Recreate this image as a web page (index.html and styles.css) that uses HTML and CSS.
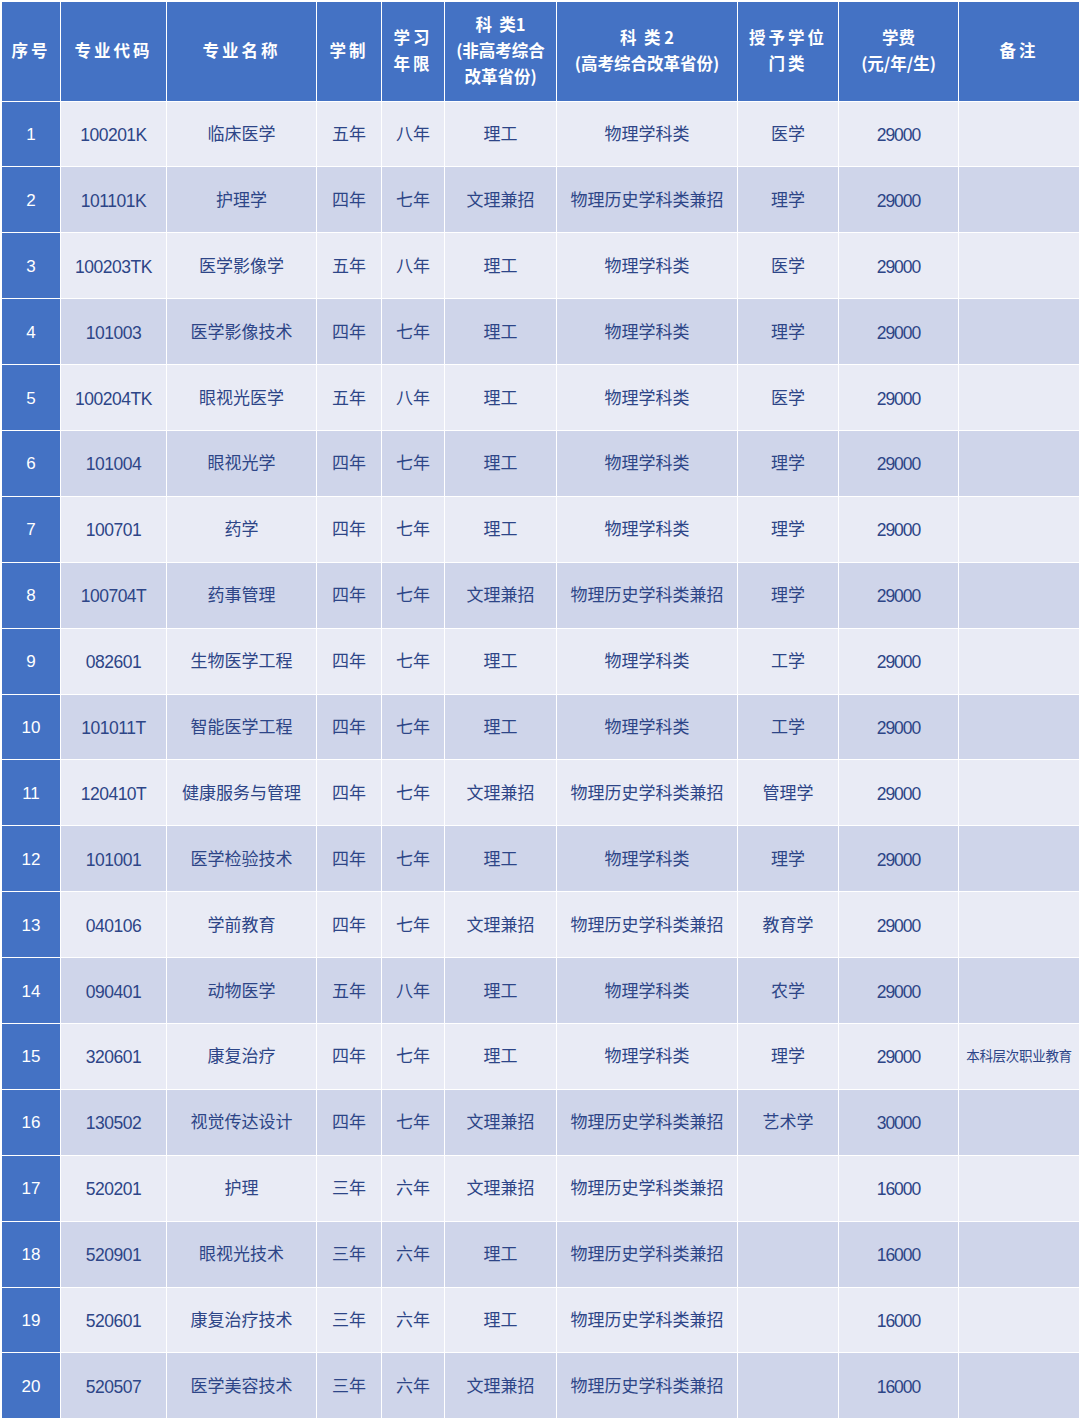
FILE: index.html
```html
<!DOCTYPE html>
<html lang="zh-CN">
<head>
<meta charset="utf-8">
<title>专业列表</title>
<link rel="stylesheet" href="styles.css">
</head>
<body>
<table class="tbl">
<colgroup>
<col class="c1"><col class="c2"><col class="c3"><col class="c4"><col class="c5"><col class="c6"><col class="c7"><col class="c8"><col class="c9"><col class="c10">
</colgroup>
<thead>
<tr>
<th class="sp">序号</th>
<th class="sp">专业代码</th>
<th class="sp">专业名称</th>
<th class="sp">学制</th>
<th class="sp">学习<br>年限</th>
<th>科&nbsp;&nbsp;类1<br>(非高考综合<br>改革省份)</th>
<th>科&nbsp;&nbsp;类&nbsp;2<br>(高考综合改革省份)</th>
<th class="sp">授予学位<br>门类</th>
<th>学费<br>(元/年/生)</th>
<th class="sp">备注</th>
</tr>
</thead>
<tbody>
<tr class="odd"><td class="idx">1</td><td class="lat">100201K</td><td>临床医学</td><td>五年</td><td>八年</td><td>理工</td><td>物理学科类</td><td>医学</td><td class="num">29000</td><td></td></tr>
<tr class="even"><td class="idx">2</td><td class="lat">101101K</td><td>护理学</td><td>四年</td><td>七年</td><td>文理兼招</td><td>物理历史学科类兼招</td><td>理学</td><td class="num">29000</td><td></td></tr>
<tr class="odd"><td class="idx">3</td><td class="lat">100203TK</td><td>医学影像学</td><td>五年</td><td>八年</td><td>理工</td><td>物理学科类</td><td>医学</td><td class="num">29000</td><td></td></tr>
<tr class="even"><td class="idx">4</td><td class="lat">101003</td><td>医学影像技术</td><td>四年</td><td>七年</td><td>理工</td><td>物理学科类</td><td>理学</td><td class="num">29000</td><td></td></tr>
<tr class="odd"><td class="idx">5</td><td class="lat">100204TK</td><td>眼视光医学</td><td>五年</td><td>八年</td><td>理工</td><td>物理学科类</td><td>医学</td><td class="num">29000</td><td></td></tr>
<tr class="even"><td class="idx">6</td><td class="lat">101004</td><td>眼视光学</td><td>四年</td><td>七年</td><td>理工</td><td>物理学科类</td><td>理学</td><td class="num">29000</td><td></td></tr>
<tr class="odd"><td class="idx">7</td><td class="lat">100701</td><td>药学</td><td>四年</td><td>七年</td><td>理工</td><td>物理学科类</td><td>理学</td><td class="num">29000</td><td></td></tr>
<tr class="even"><td class="idx">8</td><td class="lat">100704T</td><td>药事管理</td><td>四年</td><td>七年</td><td>文理兼招</td><td>物理历史学科类兼招</td><td>理学</td><td class="num">29000</td><td></td></tr>
<tr class="odd"><td class="idx">9</td><td class="lat">082601</td><td>生物医学工程</td><td>四年</td><td>七年</td><td>理工</td><td>物理学科类</td><td>工学</td><td class="num">29000</td><td></td></tr>
<tr class="even"><td class="idx">10</td><td class="lat">101011T</td><td>智能医学工程</td><td>四年</td><td>七年</td><td>理工</td><td>物理学科类</td><td>工学</td><td class="num">29000</td><td></td></tr>
<tr class="odd"><td class="idx">11</td><td class="lat">120410T</td><td>健康服务与管理</td><td>四年</td><td>七年</td><td>文理兼招</td><td>物理历史学科类兼招</td><td>管理学</td><td class="num">29000</td><td></td></tr>
<tr class="even"><td class="idx">12</td><td class="lat">101001</td><td>医学检验技术</td><td>四年</td><td>七年</td><td>理工</td><td>物理学科类</td><td>理学</td><td class="num">29000</td><td></td></tr>
<tr class="odd"><td class="idx">13</td><td class="lat">040106</td><td>学前教育</td><td>四年</td><td>七年</td><td>文理兼招</td><td>物理历史学科类兼招</td><td>教育学</td><td class="num">29000</td><td></td></tr>
<tr class="even"><td class="idx">14</td><td class="lat">090401</td><td>动物医学</td><td>五年</td><td>八年</td><td>理工</td><td>物理学科类</td><td>农学</td><td class="num">29000</td><td></td></tr>
<tr class="odd"><td class="idx">15</td><td class="lat">320601</td><td>康复治疗</td><td>四年</td><td>七年</td><td>理工</td><td>物理学科类</td><td>理学</td><td class="num">29000</td><td class="note">本科层次职业教育</td></tr>
<tr class="even"><td class="idx">16</td><td class="lat">130502</td><td>视觉传达设计</td><td>四年</td><td>七年</td><td>文理兼招</td><td>物理历史学科类兼招</td><td>艺术学</td><td class="num">30000</td><td></td></tr>
<tr class="odd"><td class="idx">17</td><td class="lat">520201</td><td>护理</td><td>三年</td><td>六年</td><td>文理兼招</td><td>物理历史学科类兼招</td><td></td><td class="num">16000</td><td></td></tr>
<tr class="even"><td class="idx">18</td><td class="lat">520901</td><td>眼视光技术</td><td>三年</td><td>六年</td><td>理工</td><td>物理历史学科类兼招</td><td></td><td class="num">16000</td><td></td></tr>
<tr class="odd"><td class="idx">19</td><td class="lat">520601</td><td>康复治疗技术</td><td>三年</td><td>六年</td><td>理工</td><td>物理历史学科类兼招</td><td></td><td class="num">16000</td><td></td></tr>
<tr class="even"><td class="idx">20</td><td class="lat">520507</td><td>医学美容技术</td><td>三年</td><td>六年</td><td>文理兼招</td><td>物理历史学科类兼招</td><td></td><td class="num">16000</td><td></td></tr>
</tbody>
</table>
</body>
</html>
```
FILE: styles.css
```css
html, body {
  margin: 0;
  padding: 0;
  background: #ffffff;
}
body {
  padding: 1px 0 0 1px;
  font-family: "Liberation Sans", "Noto Sans CJK SC", sans-serif;
}
.tbl {
  border-collapse: collapse;
  table-layout: fixed;
  width: 1078px;
}
.c1 { width: 59px; }
.c2 { width: 106px; }
.c3 { width: 150px; }
.c4 { width: 65px; }
.c5 { width: 63px; }
.c6 { width: 112px; }
.c7 { width: 181px; }
.c8 { width: 101px; }
.c9 { width: 120px; }
.c10 { width: 121px; }
.tbl th, .tbl td {
  border: 1.5px solid #ffffff;
  text-align: center;
  vertical-align: middle;
  padding: 0;
}
.tbl th {
  height: 96.5px;
  background: #4472c4;
  color: #ffffff;
  font-family: "Noto Sans CJK SC", sans-serif;
  font-weight: 700;
  font-size: 16.5px;
  line-height: 26px;
  padding-bottom: 2px;
}
.tbl th.sp {
  letter-spacing: 3px;
}
.tbl td {
  height: 62.9px;
  padding-bottom: 2px;
  color: #2d4587;
  font-size: 17px;
  line-height: 24px;
  font-family: "Noto Sans CJK SC", sans-serif;
}
.tbl td.lat, .tbl td.num {
  font-family: "Liberation Sans", sans-serif;
  font-size: 17.5px;
  letter-spacing: -0.5px;
  padding-top: 2px;
  padding-bottom: 0;
  height: 62.9px;
}
.tbl td.num {
  letter-spacing: -1px;
}
.odd td { background: #e9ebf5; }
.even td { background: #cfd5ea; }
.tbl td.idx {
  background: #4472c4;
  color: #ffffff;
  font-family: "Liberation Sans", sans-serif;
  font-size: 17px;
  padding-top: 2px;
  padding-bottom: 0;
}
.tbl td.note {
  font-size: 13.5px;
  letter-spacing: -0.3px;
}
```
